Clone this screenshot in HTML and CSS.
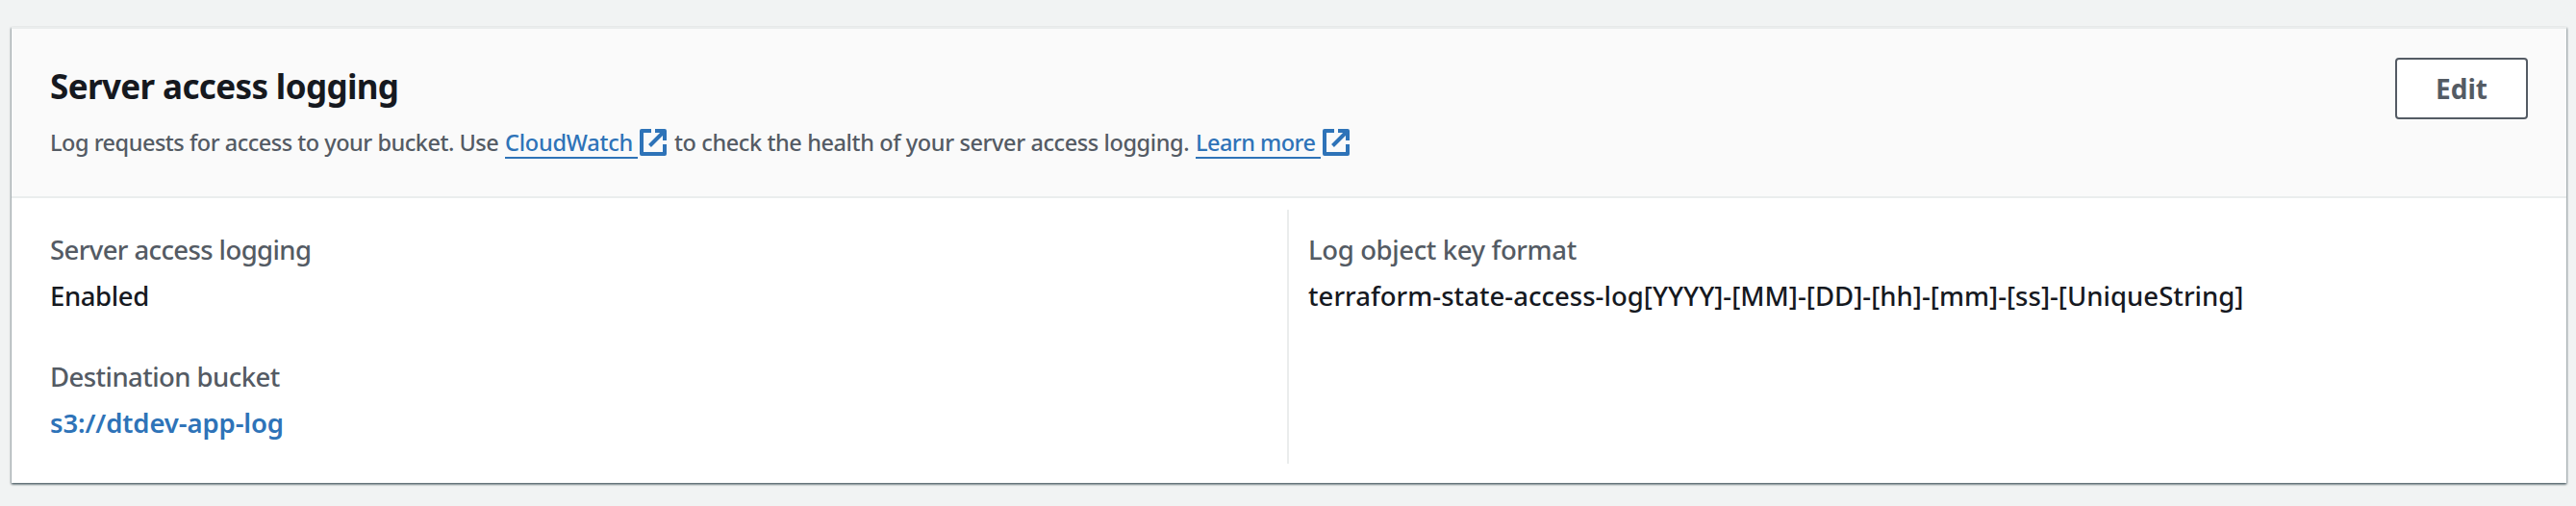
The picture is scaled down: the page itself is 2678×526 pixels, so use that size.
FILE: index.html
```html
<!DOCTYPE html>
<html lang="en">
<head>
<meta charset="utf-8">
<title>Server access logging</title>
<link rel="stylesheet" href="styles.css">
</head>
<body>
<section class="card">
  <header class="card-header">
    <div class="heading">
      <h2 class="title">Server access logging</h2>
      <p class="description">
        <span class="intro">Log requests for access to your bucket. Use</span>
        <a class="link" href="#"><span class="link-text link-cloudwatch">CloudWatch</span><svg class="external" viewBox="0 0 28 28"><path d="M12 2H2v24h24V16M16 2h10v10M25 3L10.5 17.5"/></svg></a>
        <span class="health">to check the health of your server access logging.</span>
        <a class="link" href="#"><span class="link-text link-learn">Learn more</span><svg class="external" viewBox="0 0 28 28"><path d="M12 2H2v24h24V16M16 2h10v10M25 3L10.5 17.5"/></svg></a>
      </p>
    </div>
    <button class="button" type="button">Edit</button>
  </header>
  <div class="columns">
    <dl class="column">
      <div class="field">
        <dt class="label label-wide">Server access logging</dt>
        <dd class="value value-status">Enabled</dd>
      </div>
      <div class="field">
        <dt class="label label-bucket">Destination bucket</dt>
        <dd class="value"><a class="bucket" href="#">s3://dtdev-app-log</a></dd>
      </div>
    </dl>
    <dl class="column column-divided">
      <div class="field">
        <dt class="label label-format">Log object key format</dt>
        <dd class="value value-format">terraform-state-access-log[YYYY]-[MM]-[DD]-[hh]-[mm]-[ss]-[UniqueString]</dd>
      </div>
    </dl>
  </div>
</section>
</body>
</html>
```
FILE: styles.css
```css
* { box-sizing: border-box; }
body {
  margin: 0;
  height: 526px;
  padding: 28px 10px 0 12px;
  background: #f1f3f3;
  color: #16191f;
  font-family: "Noto Sans", "Open Sans", sans-serif;
  font-size: 27.5px;
  font-weight: 500;
  overflow: hidden;
}
.card {
  height: 474px;
  background: #fff;
  border-top: 2px solid #eaeded;
  box-shadow: 0 2px 2px 0 rgba(0, 28, 36, .35), 1px 1px 2px 0 rgba(0, 28, 36, .3), -1px 1px 2px 0 rgba(0, 28, 36, .3);
}
.card-header {
  display: flex;
  justify-content: space-between;
  align-items: flex-start;
  height: 176px;
  padding: 30px 40px 0;
  background: #fafafa;
  border-bottom: 2px solid #eaeded;
}
.title { margin: 0; font-size: 35px; line-height: 59px; font-weight: 700; letter-spacing: -.63px; }
.description {
  display: flex;
  align-items: flex-start;
  margin: 9px 0 0;
  height: 40px;
  font-size: 23.5px;
  line-height: 40px;
  color: #545b64;
  white-space: nowrap;
}
.intro { width: 473px; letter-spacing: -.49px; }
.health { width: 542px; margin-left: 8px; letter-spacing: -.4px; }
.link { display: flex; color: #2e73b8; text-decoration: none; }
.link-text { height: 37px; border-bottom: 2px solid #2e73b8; }
.link-cloudwatch { width: 138px; letter-spacing: -.22px; }
.link-learn { width: 130px; letter-spacing: -.55px; }
.external {
  width: 28px;
  height: 28px;
  margin: 6px 0 0 2px;
  fill: none;
  stroke: #2e73b8;
  stroke-width: 4;
  stroke-linejoin: round;
}
.button {
  width: 138px;
  height: 64px;
  padding: 0;
  background: #fff;
  border: 2px solid #545b64;
  border-radius: 4px;
  color: #545b64;
  font: inherit;
  font-size: 28px;
  font-weight: 700;
}
.columns { display: grid; grid-template-columns: 1326px 1fr; padding-top: 12px; }
.column { display: flex; flex-direction: column; gap: 36px; height: 264px; margin: 0; padding: 18px 40px 0; }
.column-divided { border-left: 2px solid #eaeded; padding-left: 20px; }
.label, .value { margin: 0; height: 48px; line-height: 48px; white-space: nowrap; }
.label { color: #545b64; }
.label-wide { letter-spacing: -.6px; }
.label-bucket { letter-spacing: -.56px; }
.label-format { letter-spacing: -.38px; }
.value-status { letter-spacing: -.4px; }
.value-format { letter-spacing: .03px; }
.bucket { color: #2e73b8; text-decoration: none; font-weight: 600; letter-spacing: -.12px; }
```
